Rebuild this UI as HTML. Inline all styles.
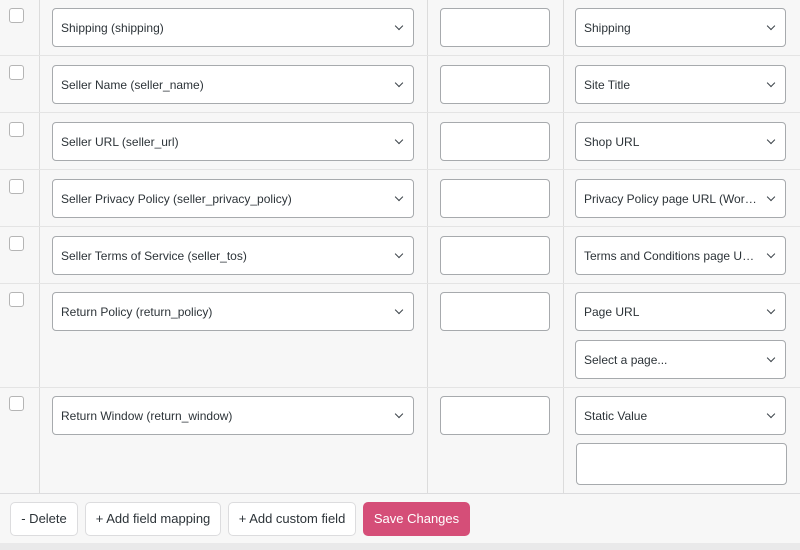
<!DOCTYPE html>
<html><head><style>
body{margin:0;width:800px;height:550px;background:#f7f7f7;position:relative;overflow:hidden;font-family:"Liberation Sans",Arial,sans-serif;font-size:12px;color:#2c3338}
.h{position:absolute;left:0;width:800px;height:1px;background:#e4e4e4}
.v{position:absolute;top:0;height:493px;width:1px;background:#dcdcdc}
.s{position:absolute;height:37px;border:1px solid #a7aaad;border-radius:4px;background:#fff;line-height:38px;padding-left:8px;padding-right:26px;box-sizing:content-box;white-space:nowrap;overflow:hidden;text-overflow:ellipsis}
.s:after{content:"";position:absolute;right:11px;top:14px;width:5px;height:5px;border-right:1.5px solid #3c434a;border-bottom:1.5px solid #3c434a;transform:rotate(45deg)}
.i{position:absolute;left:440px;width:108px;height:37px;border:1px solid #a7aaad;border-radius:4px;background:#fff}
.c{position:absolute;left:9px;width:13px;height:13px;border:1px solid #b5b5b5;border-radius:3px;background:#fff}
.b{position:absolute;top:502px;height:32px;border:1px solid #dcdcde;border-radius:5px;background:#fff;line-height:32px;text-align:center;font-size:13px;color:#2c3338}
</style></head><body>
<div class="v" style="left:39px"></div><div class="v" style="left:427px"></div><div class="v" style="left:563px"></div>
<div class="h" style="top:55px"></div><div class="h" style="top:112px"></div><div class="h" style="top:169px"></div><div class="h" style="top:226px"></div><div class="h" style="top:283px"></div><div class="h" style="top:387px"></div><div class="h" style="top:493px;background:#dcdcde"></div>
<div class="h" style="top:543px;height:7px;background:#e9e9ea"></div>

<div class="c" style="top:8px"></div><div class="s" style="left:52px;top:8px;width:326px">Shipping (shipping)</div><div class="i" style="top:8px"></div><div class="s" style="left:575px;top:8px;width:175px">Shipping</div>
<div class="c" style="top:65px"></div><div class="s" style="left:52px;top:65px;width:326px">Seller Name (seller_name)</div><div class="i" style="top:65px"></div><div class="s" style="left:575px;top:65px;width:175px">Site Title</div>
<div class="c" style="top:122px"></div><div class="s" style="left:52px;top:122px;width:326px">Seller URL (seller_url)</div><div class="i" style="top:122px"></div><div class="s" style="left:575px;top:122px;width:175px">Shop URL</div>
<div class="c" style="top:179px"></div><div class="s" style="left:52px;top:179px;width:326px">Seller Privacy Policy (seller_privacy_policy)</div><div class="i" style="top:179px"></div><div class="s" style="left:575px;top:179px;width:175px">Privacy Policy page URL (Word…</div>
<div class="c" style="top:236px"></div><div class="s" style="left:52px;top:236px;width:326px">Seller Terms of Service (seller_tos)</div><div class="i" style="top:236px"></div><div class="s" style="left:575px;top:236px;width:175px">Terms and Conditions page UR…</div>
<div class="c" style="top:292px"></div><div class="s" style="left:52px;top:292px;width:326px">Return Policy (return_policy)</div><div class="i" style="top:292px"></div><div class="s" style="left:575px;top:292px;width:175px">Page URL</div>
<div class="s" style="left:575px;top:340px;width:175px">Select a page...</div>
<div class="c" style="top:396px"></div><div class="s" style="left:52px;top:396px;width:326px">Return Window (return_window)</div><div class="i" style="top:396px"></div><div class="s" style="left:575px;top:396px;width:175px">Static Value</div>
<div style="position:absolute;left:576px;top:443px;width:209px;height:40px;border:1px solid #a7aaad;border-radius:4px;background:#fff"></div>

<div class="b" style="left:10px;width:66px">- Delete</div>
<div class="b" style="left:85px;width:134px">+ Add field mapping</div>
<div class="b" style="left:228px;width:126px">+ Add custom field</div>
<div class="b" style="left:363px;width:107px;top:502px;height:34px;border:none;background:#d54e78;color:#fff;line-height:34px">Save Changes</div>
</body></html>
